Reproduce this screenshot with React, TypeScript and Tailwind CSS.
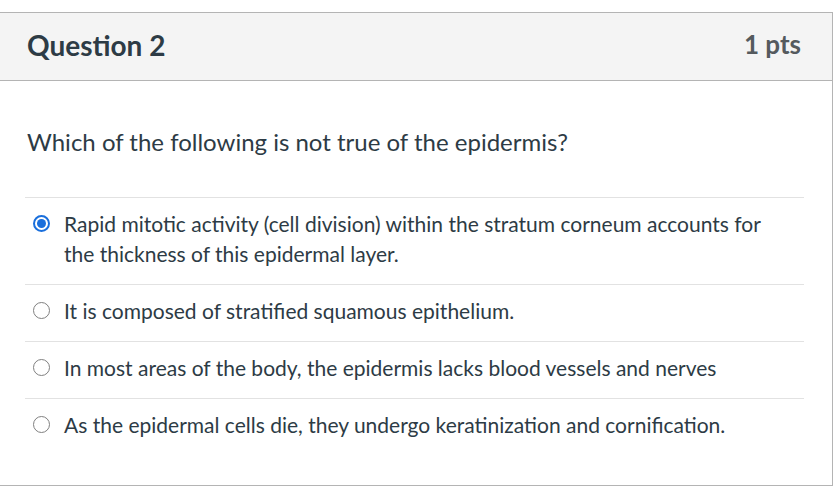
const answers = [
  {
    id: 1,
    text: "Rapid mitotic activity (cell division) within the stratum corneum accounts for the thickness of this epidermal layer.",
    selected: true,
  },
  { id: 2, text: "It is composed of stratified squamous epithelium.", selected: false },
  {
    id: 3,
    text: "In most areas of the body, the epidermis lacks blood vessels and nerves",
    selected: false,
  },
  {
    id: 4,
    text: "As the epidermal cells die, they undergo keratinization and cornification.",
    selected: false,
  },
];

function Radio({ checked }: { checked: boolean }) {
  if (checked) {
    return (
      <span className="mt-[6px] flex h-[17px] w-[17px] shrink-0 items-center justify-center rounded-full border-2 border-[#1a6fdc] bg-white">
        <span className="h-[9px] w-[9px] rounded-full bg-[#1a6fdc]" />
      </span>
    );
  }
  return <span className="mt-[6px] h-[17px] w-[17px] shrink-0 rounded-full border-[1.5px] border-[#808080] bg-white" />;
}

export default function App() {
  return (
    <div className="h-[490px] w-[839px] bg-white pt-[12px] font-['Lato','Liberation_Sans',sans-serif] text-[#2d3b45]">
      <div className="w-[833px] border-y border-r border-[#b4b4b4]">
        {/* Header */}
        <div className="flex h-[68px] items-center justify-between border-b border-[#b4b4b4] bg-[#f4f4f4] pb-[4px] pl-[27px] pr-[31px]">
          <h2 className="text-[28px] font-bold text-[#2d3b45]">Question 2</h2>
          <span className="text-[26px] font-bold text-[#555a5e]">1 pts</span>
        </div>

        {/* Body */}
        <div className="pl-[25px] pr-[28px] pb-[30px]">
          <p className="mt-[46px] mb-[40px] pl-[2px] text-[24px] leading-[30px]">
            Which of the following is not true of the epidermis?
          </p>
          <div>
            {answers.map((a) => (
              <label
                key={a.id}
                className="flex items-start gap-[14px] border-t border-[#e2e2e2] pt-[11px] pb-[15px] pl-[8px] text-[21px] leading-[30px]"
              >
                <Radio checked={a.selected} />
                <span className="max-w-[710px]">{a.text}</span>
              </label>
            ))}
          </div>
        </div>
      </div>
    </div>
  );
}
